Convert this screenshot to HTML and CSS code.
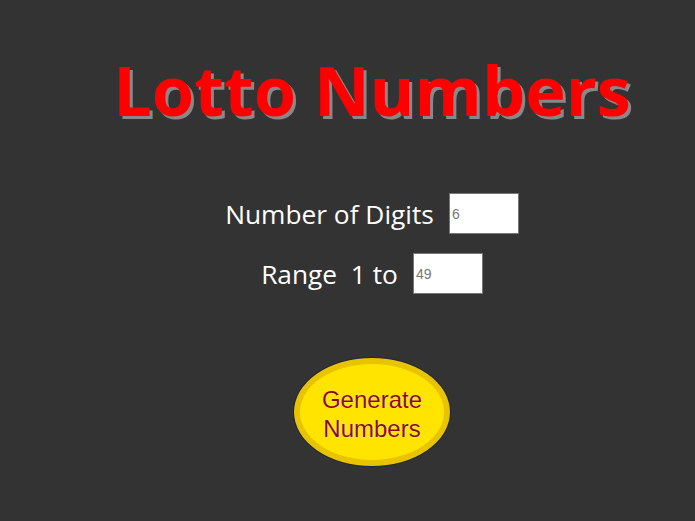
FILE: index.html
```html
<!DOCTYPE html>
<html>
<head>
<meta charset="utf-8">
<link rel="stylesheet" href="styles.css">
</head>
<body>
<div class="page">
  <h1 class="title">Lotto Numbers</h1>
  <div class="form">
    <div class="row">
      <label class="label" for="digits">Number of Digits</label>
      <input class="field" id="digits" type="text" placeholder="6">
    </div>
    <div class="row">
      <label class="label" for="range">Range&nbsp; 1 to</label>
      <input class="field" id="range" type="text" placeholder="49">
    </div>
  </div>
  <button class="generate">Generate<br>Numbers</button>
</div>
</body>
</html>
```
FILE: styles.css
```css
html, body {
  margin: 0;
  padding: 0;
  background: #333333;
  height: 100%;
  overflow: hidden;
}
.page {
  padding-left: 49px;
  display: flex;
  flex-direction: column;
  align-items: center;
  font-family: "Open Sans", sans-serif;
}
.title {
  margin: 50px 0 0;
  font-family: "Open Sans", sans-serif;
  font-weight: 700;
  font-size: 68.5px;
  line-height: 80px;
  color: #ff0000;
  text-shadow: 3px 3px 0 #888888;
}
.form {
  margin-top: 63px;
  display: flex;
  flex-direction: column;
  align-items: center;
  gap: 19px;
}
.row {
  display: flex;
  align-items: center;
  gap: 15px;
}
.label {
  color: #ffffff;
  font-size: 26.3px;
}
.field {
  width: 70px;
  height: 41px;
  box-sizing: border-box;
  border: 1px solid #777;
  background: #fff;
  padding: 0 2px;
  font-family: "Liberation Sans", Arial, sans-serif;
  font-size: 14px;
}
.field::placeholder {
  color: #777;
}
.generate {
  margin-top: 64px;
  width: 156px;
  height: 108px;
  border-radius: 50%;
  background: #ffe400;
  border: 6px solid #e8c400;
  box-shadow: 0 0 0 1px #1f2638;
  box-sizing: border-box;
  color: #8b0a0a;
  font-family: "Liberation Sans", Arial, sans-serif;
  font-size: 24px;
  line-height: 29px;
  text-shadow: 0 0 1px #fff;
  padding: 3px 0 0;
  cursor: pointer;
}
```
